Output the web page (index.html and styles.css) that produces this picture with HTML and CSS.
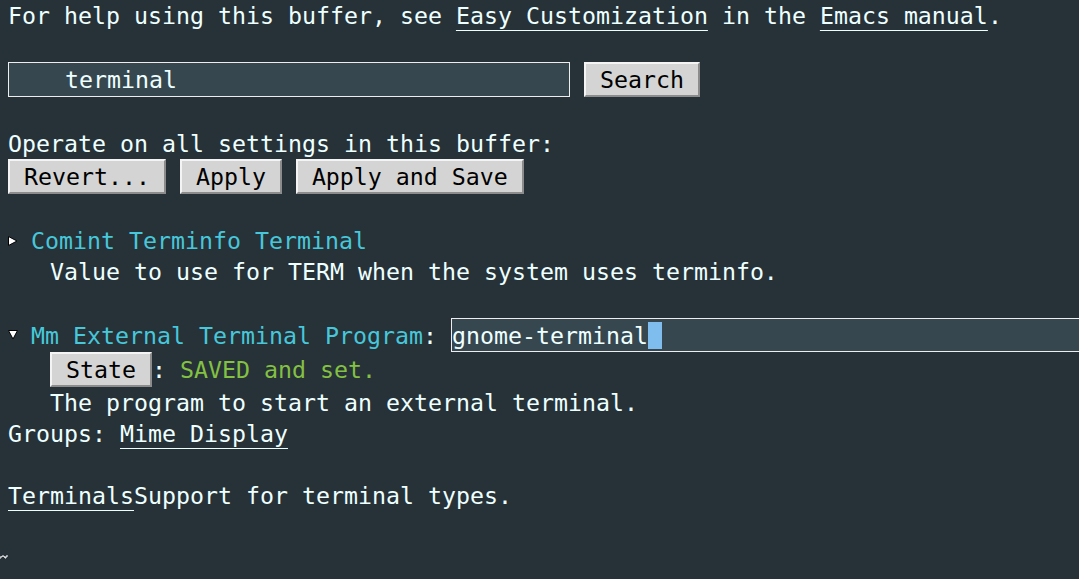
FILE: index.html
```html
<!DOCTYPE html>
<html>
<head>
<meta charset="utf-8">
<link rel="stylesheet" href="styles.css">
</head>
<body>
<div class="buffer">
  <div class="line"><span class="t">For help using this buffer, see </span><span class="t link">Easy Customization</span><span class="t"> in the </span><span class="t link">Emacs manual</span><span class="t">.</span></div>
  <div class="line"></div>
  <div class="line tall"><div class="field search-field"><span class="t">    terminal</span></div><span class="btn gap">Search</span></div>
  <div class="line"></div>
  <div class="line"><span class="t">Operate on all settings in this buffer:</span></div>
  <div class="line tall"><span class="btn">Revert...</span><span class="btn gap">Apply</span><span class="btn gap">Apply and Save</span></div>
  <div class="line"></div>
  <div class="line"><svg class="tri" width="10" height="10" viewBox="0 0 10 10"><polygon points="0.5,0.5 9,5 0.5,9.5" fill="#fff" stroke="#000" stroke-width="1"/></svg><span class="t"> </span><span class="t cyan">Comint Terminfo Terminal</span></div>
  <div class="line"><span class="t">   Value to use for TERM when the system uses terminfo.</span></div>
  <div class="line"></div>
  <div class="line mid"><svg class="tri" width="10" height="10" viewBox="0 0 10 10"><polygon points="0.5,0.5 9.5,0.5 5,9" fill="#fff" stroke="#000" stroke-width="1"/></svg><span class="t"> </span><span class="t cyan">Mm External Terminal Program</span><span class="t">: </span><div class="field value-field"><span class="t">gnome-terminal</span><span class="t cursor"> </span></div></div>
  <div class="line tall"><span class="t">   </span><span class="btn">State</span><span class="t">: </span><span class="t green">SAVED and set.</span></div>
  <div class="line"><span class="t">   The program to start an external terminal.</span></div>
  <div class="line"><span class="t">Groups: </span><span class="t link">Mime Display</span></div>
  <div class="line"></div>
  <div class="line"><span class="t link">Terminals</span><span class="t">Support for terminal types.</span></div>
  <div class="line"></div>
  <div class="line"><svg class="tilde" width="8" height="5" viewBox="0 0 8 5"><path d="M0 4 V2 H2 V1 H4 V2 H5 V3 H6 V1 H8" fill="none" stroke="#fff" stroke-width="1"/></svg></div>
</div>
</body>
</html>
```
FILE: styles.css
```css
html, body {
  margin: 0;
  padding: 0;
  background: #263238;
  overflow: hidden;
  width: 1079px;
  height: 579px;
}
.buffer {
  padding-left: 8px;
  font-family: "DejaVu Sans Mono", "Liberation Mono", monospace;
  font-size: 23.25px;
  color: #eeffff;
}
.line {
  display: flex;
  align-items: center;
  height: 31px;
  white-space: pre;
}
.line.tall {
  height: 35px;
}
.line.mid {
  height: 34px;
}
.t {
  white-space: pre;
  line-height: 27px;
}
.link {
  text-decoration: underline;
  text-decoration-thickness: 1px;
  text-underline-offset: 6px;
}
.cyan {
  color: #47c7d9;
}
.green {
  color: #84c042;
}
.field {
  box-sizing: border-box;
  height: 100%;
  background: #37474f;
  border: 1px solid #eeeeee;
  display: flex;
  align-items: center;
  flex: none;
}
.search-field {
  width: 562px;
}
.value-field {
  flex: 1 1 auto;
  min-width: 0;
  border-right: none;
}
.cursor {
  background: #7fbdee;
}
.btn {
  box-sizing: border-box;
  height: 35px;
  display: flex;
  align-items: center;
  padding: 0 1ch;
  background: #d4d4d4;
  color: #000;
  border: 2px solid;
  border-color: #f4f4f4 #8c8c8c #8c8c8c #f4f4f4;
  white-space: pre;
  flex: none;
}
.gap {
  margin-left: 1ch;
}
.tri {
  display: block;
  flex: none;
  margin-right: -1px;
}
.tilde {
  display: block;
  margin-left: -8px;
}
```
